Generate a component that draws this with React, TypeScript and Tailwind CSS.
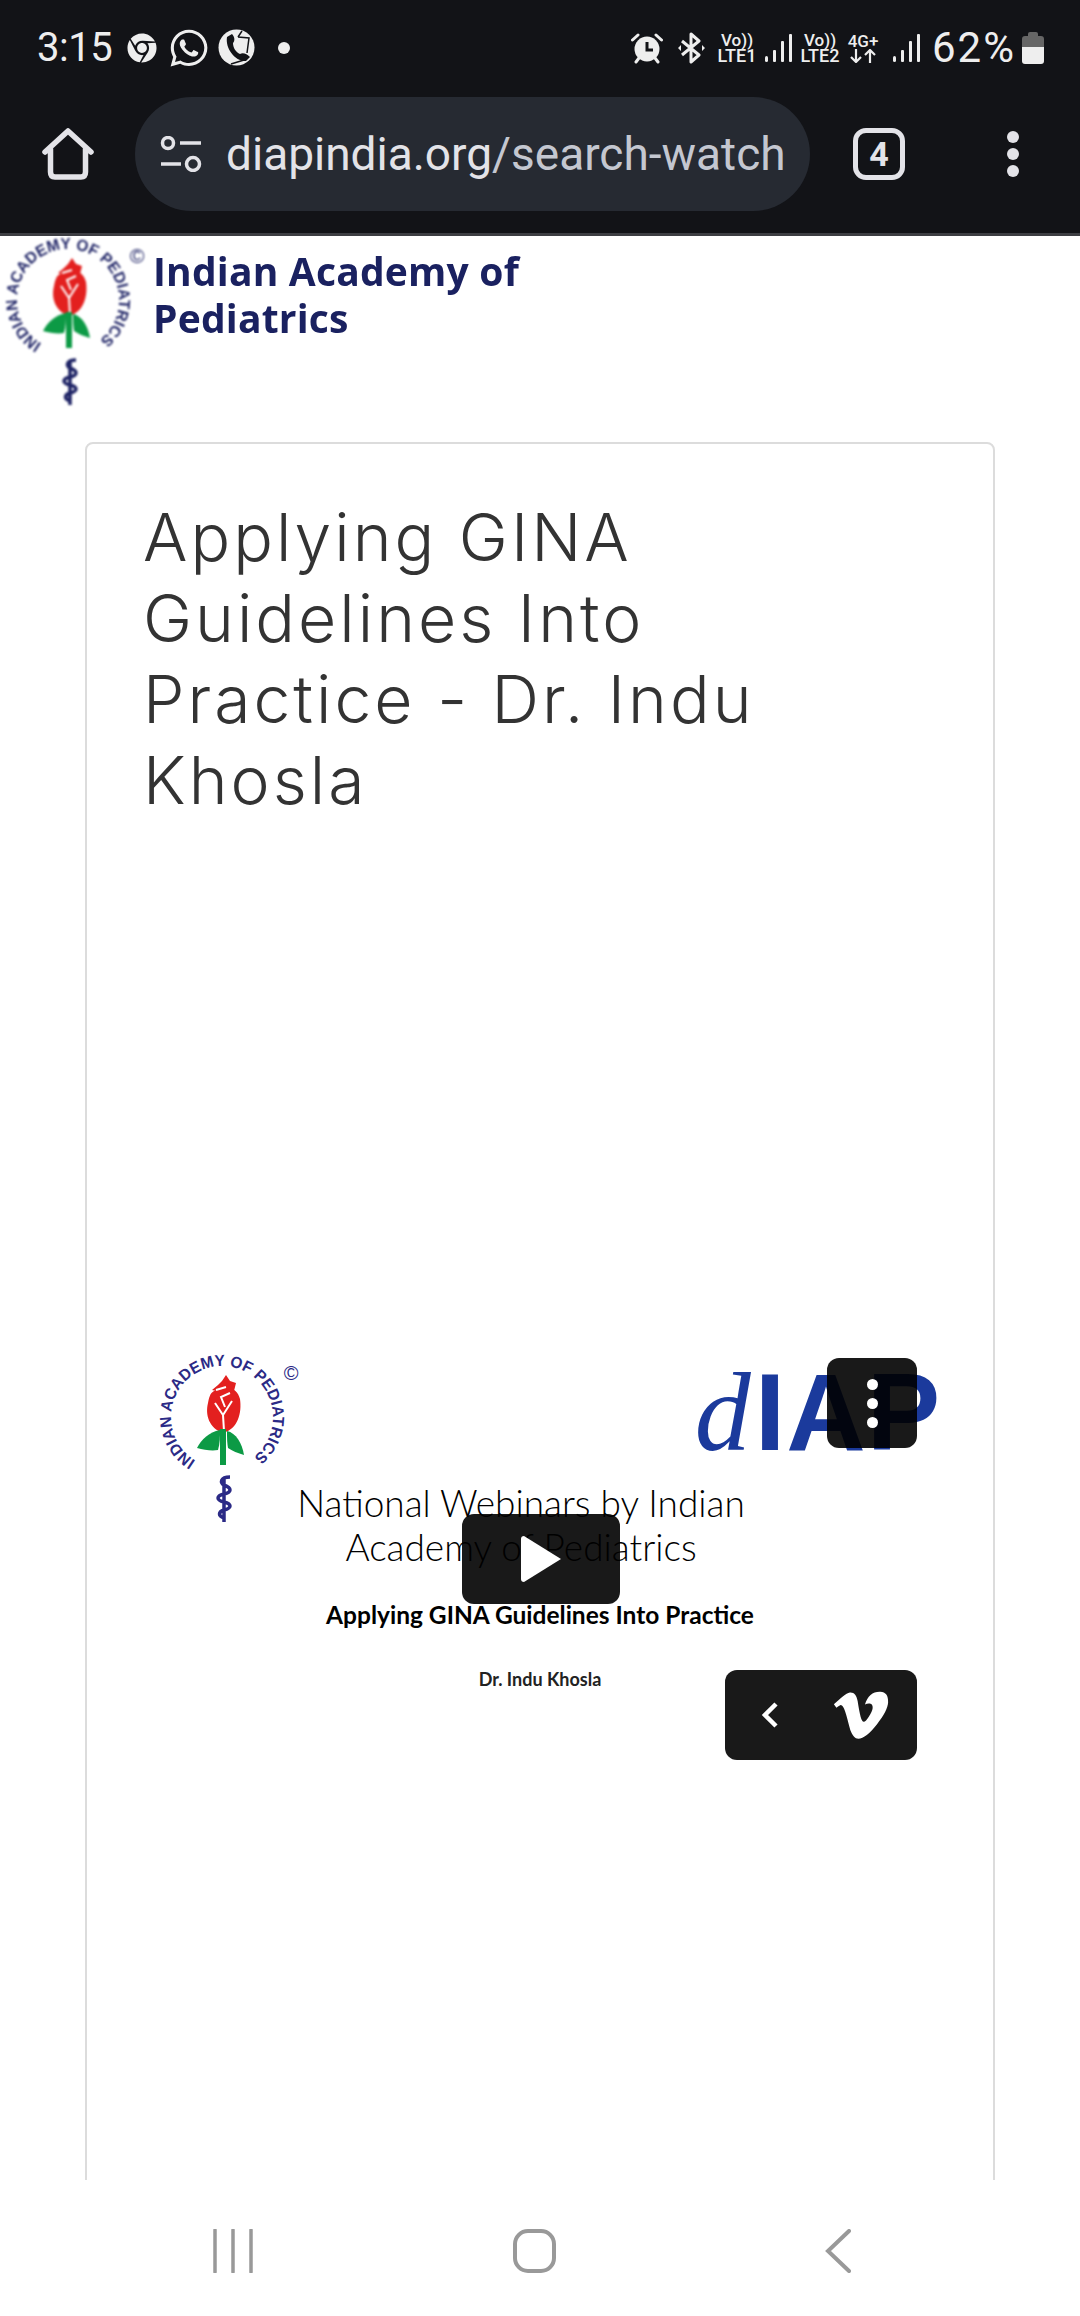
import { FaChrome, FaVimeoV, FaWhatsapp } from 'react-icons/fa'

const Signal = () => (
    <svg width="28" height="30" viewBox="0 0 28 30" className="text-[#eeeeee]">
        <rect x="0" y="23" width="3" height="6" rx="1.5" fill="currentColor" />
        <rect x="8" y="17" width="3" height="12" rx="1" fill="currentColor" />
        <rect x="16" y="8" width="3" height="21" rx="1" fill="currentColor" />
        <rect x="24" y="1" width="3" height="28" rx="1" fill="currentColor" />
    </svg>
)

const VoLte = ({ line }: { line: string }) => (
    <div className="flex w-[40px] flex-col items-center font-['Roboto',sans-serif] text-[18px] font-medium leading-[16px] text-[#eeeeee]">
        <span className="text-[17px]">Vo))</span>
        <span>{line}</span>
    </div>
)

const RoseLogo = ({ id, ring }: { id: string; ring: string }) => (
    <svg width="150" height="180" viewBox="0 0 150 180" className="shrink-0">
        <path id={id} d="M 41.7 107.7 A 51 51 0 1 1 99.4 104.2" fill="none" />
        <text fill={ring} fontFamily="'Liberation Sans', sans-serif" fontWeight="700" fontSize="16">
            <textPath href={`#${id}`} textLength="258" lengthAdjust="spacingAndGlyphs">INDIAN ACADEMY OF PEDIATRICS</textPath>
        </text>
        <text x="137" y="27" textAnchor="middle" fill={ring} fontFamily="'Liberation Sans', sans-serif" fontSize="20">©</text>
        <path d="M54 50 C51 62 55 75 69 80 C84 76 88 60 86 46 C84 38 78 34 72 36 L60 38 C56 40 55 45 54 50 Z" fill="#e3201f" />
        <path d="M58 37 L64 32 L68 28 L72 22 L76 28 L82 30 L80 38 L70 40 Z" fill="#e3201f" />
        <path d="M70 78 L69 62 L61 50 M69 62 L78 48 M71 54 L67 44 L76 40 M62 37 L72 34" stroke="#ffffff" strokeWidth="2" fill="none" />
        <path d="M66 77 C55 79 47 87 43 95 C50 97 58 98 64 97 C66 90 66 84 66 77 Z" fill="#0c9a45" />
        <path d="M73 78 C82 80 88 90 90 102 C84 100 78 98 74 95 C73 90 73 84 73 78 Z" fill="#0c9a45" />
        <rect x="66" y="76" width="6" height="36" fill="#0c9a45" />
        <path d="M76 124 C66 124 66 130 70 132 C78 135 78 139 70 141 C62 143 62 147 70 149 C78 151 78 155 70 157 C64 159 64 163 70 165 M70 124 L70 169" fill="none" stroke={ring} strokeWidth="3.5" />
    </svg>
)

export default function App() {
    return (
        <div className="flex h-[2316px] w-[1080px] flex-col overflow-hidden bg-white font-['Roboto',sans-serif]">
            <header className="h-[236px] shrink-0 border-b-[3px] border-[#3d3e43] bg-[#121317]">
                <div className="flex h-[97px] items-center justify-between pb-[2px] pl-[37px] pr-[36px] text-[#eeeeee]">
                    <div className="flex items-center">
                        <span className="text-[40px] font-normal tracking-[-0.5px]">3:15</span>
                        <FaChrome className="ml-[15px] h-[30px] w-[30px]" />
                        <FaWhatsapp className="ml-[11px] h-[42px] w-[42px]" />
                        <svg width="37" height="37" viewBox="0 0 37 37" className="ml-[8px]">
                            <circle cx="18.5" cy="18.5" r="18" fill="#eeeeee" />
                            <path d="M9 8 L14 5 C17 8 17 12 15 14 C15 19 18 23 22 25 C25 23 29 25 32 28 L28 32 C18 33 7 20 9 8 Z" fill="#121317" />
                            <path d="M20 8 L24 2 M20 8 L31 9 L29 24 M13 35 L26 31" stroke="#121317" strokeWidth="1.5" fill="none" />
                        </svg>
                        <span className="ml-[23px] h-[12px] w-[12px] rounded-full bg-[#eeeeee]" />
                    </div>
                    <div className="flex items-center">
                        <svg width="32" height="32" viewBox="0 0 32 32">
                            <circle cx="16" cy="17" r="12.5" fill="#eeeeee" />
                            <path d="M16 10 V18 H22" stroke="#121317" strokeWidth="3" fill="none" />
                            <path d="M1.5 8 L7 3 M30.5 8 L25 3 M5 30 L8 26 M27 30 L24 26" stroke="#eeeeee" strokeWidth="3" strokeLinecap="round" />
                        </svg>
                        <svg width="27" height="32" viewBox="0 0 27 32" className="ml-[15px]">
                            <path d="M4 9 L21 23 L13 30 V2 L21 9 L4 23" stroke="#eeeeee" strokeWidth="3" fill="none" strokeLinejoin="round" />
                            <path d="M0 16 L3 13 V19 Z M27 16 L24 13 V19 Z" fill="#eeeeee" />
                        </svg>
                        <div className="ml-[12px]"><VoLte line="LTE1" /></div>
                        <div className="ml-[8px]"><Signal /></div>
                        <div className="ml-[7px]"><VoLte line="LTE2" /></div>
                        <div className="ml-[6px] flex w-[34px] flex-col items-center text-[17px] font-medium leading-[16px]">
                            <span>4G+</span>
                            <svg width="26" height="14" viewBox="0 0 26 14">
                                <path d="M6 0 V12 M1 8 L6 13 L11 8 M20 14 V2 M15 6 L20 1 L25 6" stroke="#eeeeee" strokeWidth="2.2" fill="none" />
                            </svg>
                        </div>
                        <div className="ml-[13px]"><Signal /></div>
                        <span className="ml-[11px] text-[42px] font-normal tracking-[2px]">62%</span>
                        <svg width="22" height="32" viewBox="0 0 22 32" className="ml-[6px]">
                            <path d="M6 4 V2 Q6 0 8 0 H14 Q16 0 16 2 V4 H19 Q22 4 22 7 V15 H0 V7 Q0 4 3 4 Z" fill="#666666" />
                            <path d="M0 15 H22 V29 Q22 32 19 32 H3 Q0 32 0 29 Z" fill="#eeeeee" />
                        </svg>
                    </div>
                </div>
                <div className="flex items-center pl-[42px]">
                    <svg width="52" height="52" viewBox="0 0 52 52" className="shrink-0">
                        <path d="M3 24 L26 3 L49 24 M8.5 21 V44 Q8.5 49 13 49 H39 Q43.5 49 43.5 44 V21" stroke="#e3e3e8" strokeWidth="5.5" fill="none" strokeLinejoin="round" strokeLinecap="round" />
                    </svg>
                    <div className="ml-[41px] flex h-[114px] w-[675px] items-center rounded-full bg-[#262a32] pl-[25px]">
                        <svg width="42" height="36" viewBox="0 0 42 36" className="shrink-0">
                            <circle cx="8" cy="7" r="5.5" stroke="#e3e3e8" strokeWidth="3.5" fill="none" />
                            <path d="M20 7 H41 M1 28 H21" stroke="#e3e3e8" strokeWidth="3.5" />
                            <circle cx="33" cy="28" r="6.5" stroke="#e3e3e8" strokeWidth="3.5" fill="none" />
                        </svg>
                        <div className="ml-[24px] whitespace-nowrap text-[46px] text-[#e3e3e8]">
                            diapindia.org<span className="text-[#c4c7d0]">/search-watch</span>
                        </div>
                    </div>
                    <div className="ml-[43px] flex h-[52px] w-[52px] items-center justify-center rounded-[13px] border-[5px] border-[#e3e3e8] text-[34px] font-bold leading-none text-[#e3e3e8]">
                        4
                    </div>
                    <div className="ml-[102px] flex flex-col gap-[5px]">
                        <span className="h-[12px] w-[12px] rounded-full bg-[#e3e3e8]" />
                        <span className="h-[12px] w-[12px] rounded-full bg-[#e3e3e8]" />
                        <span className="h-[12px] w-[12px] rounded-full bg-[#e3e3e8]" />
                    </div>
                </div>
            </header>

            <main className="min-h-0 flex-1 overflow-hidden bg-white">
                <div className="flex h-[206px] items-start">
                    <div className="blur-[0.8px]"><RoseLogo id="ring-top" ring="#1f2466" /></div>
                    <h2 className="ml-[3px] mt-[11px] font-['Open_Sans',sans-serif] text-[39px] font-bold leading-[47px] tracking-[0.2px] text-[#1a2160] blur-[0.5px]">
                        Indian Academy of<br />Pediatrics
                    </h2>
                </div>
                <section className="mx-[85px] rounded-lg border-2 border-[#dcdcdc] px-[56px] pb-[500px] pt-[53px]">
                    <h1 className="font-['Inter',sans-serif] text-[66px] font-light leading-[81px] tracking-[3px] text-[#333333]">
                        Applying GINA<br />Guidelines Into<br />Practice - Dr. Indu<br />Khosla
                    </h1>
                    <div className="relative mt-[515px] h-[446px] w-[794px] pt-[17px]">
                        <div className="flex items-start justify-between pl-[11px]">
                            <RoseLogo id="ring-video" ring="#2b2a86" />
                            <div className="-mr-[4px] mt-[14px] flex items-baseline whitespace-nowrap leading-[90px] text-[#1b3a9c]">
                                <span className="mr-[4px] font-['Liberation_Serif',serif] text-[112px] font-normal italic">d</span>
                                <span className="font-['Liberation_Sans',sans-serif] text-[110px] font-bold tracking-[1px]">IAP</span>
                            </div>
                        </div>
                        <div className="-mt-[52px] pr-[38px] text-center font-['Lato',sans-serif] text-[37px] font-light leading-[44px] text-black">
                            National Webinars by Indian<br />Academy of Pediatrics
                        </div>
                        <div className="mt-[28px] text-center font-['Lato',sans-serif] text-[24.5px] font-bold text-black">
                            Applying GINA Guidelines Into Practice
                        </div>
                        <div className="mt-[32px] text-center font-['Lato',sans-serif] text-[18px] font-bold text-[#222222]">
                            Dr. Indu Khosla
                        </div>

                        <button className="absolute right-[20px] top-[22px] flex h-[90px] w-[90px] flex-col items-center justify-center gap-[8px] rounded-xl bg-black/90">
                            <span className="h-[11px] w-[11px] rounded-full bg-white" />
                            <span className="h-[11px] w-[11px] rounded-full bg-white" />
                            <span className="h-[11px] w-[11px] rounded-full bg-white" />
                        </button>
                        <button className="absolute left-[319px] top-[178px] flex h-[90px] w-[158px] items-center justify-center rounded-xl bg-black/90">
                            <svg width="40" height="46" viewBox="0 0 40 46">
                                <path d="M3 0 L40 23 L3 46 Q0 46 0 43 V3 Q0 0 3 0 Z" fill="#ffffff" />
                            </svg>
                        </button>
                        <div className="absolute bottom-[22px] right-[20px] flex h-[90px] w-[192px] items-center rounded-xl bg-black/90 pl-[36px] text-white">
                            <svg width="18" height="26" viewBox="0 0 18 26">
                                <path d="M15 2 L4 13 L15 24" stroke="#ffffff" strokeWidth="4.5" fill="none" />
                            </svg>
                            <FaVimeoV className="ml-[51px] h-[62px] w-[62px]" />
                        </div>
                    </div>
                </section>
            </main>

            <nav className="flex h-[136px] shrink-0 items-center bg-white pl-[213px] pt-[6px]">
                <svg width="40" height="44" viewBox="0 0 40 44">
                    <path d="M2 1 V43 M20 1 V43 M38 1 V43" stroke="#999999" strokeWidth="3.5" strokeLinecap="round" />
                </svg>
                <svg width="43" height="44" viewBox="0 0 43 44" className="ml-[260px]">
                    <rect x="2" y="2" width="39" height="40" rx="13" stroke="#999999" strokeWidth="4" fill="none" />
                </svg>
                <svg width="26" height="44" viewBox="0 0 26 44" className="ml-[269px]">
                    <path d="M24 2 L3 22 L24 42" stroke="#999999" strokeWidth="4" fill="none" strokeLinecap="round" />
                </svg>
            </nav>
        </div>
    )
}
